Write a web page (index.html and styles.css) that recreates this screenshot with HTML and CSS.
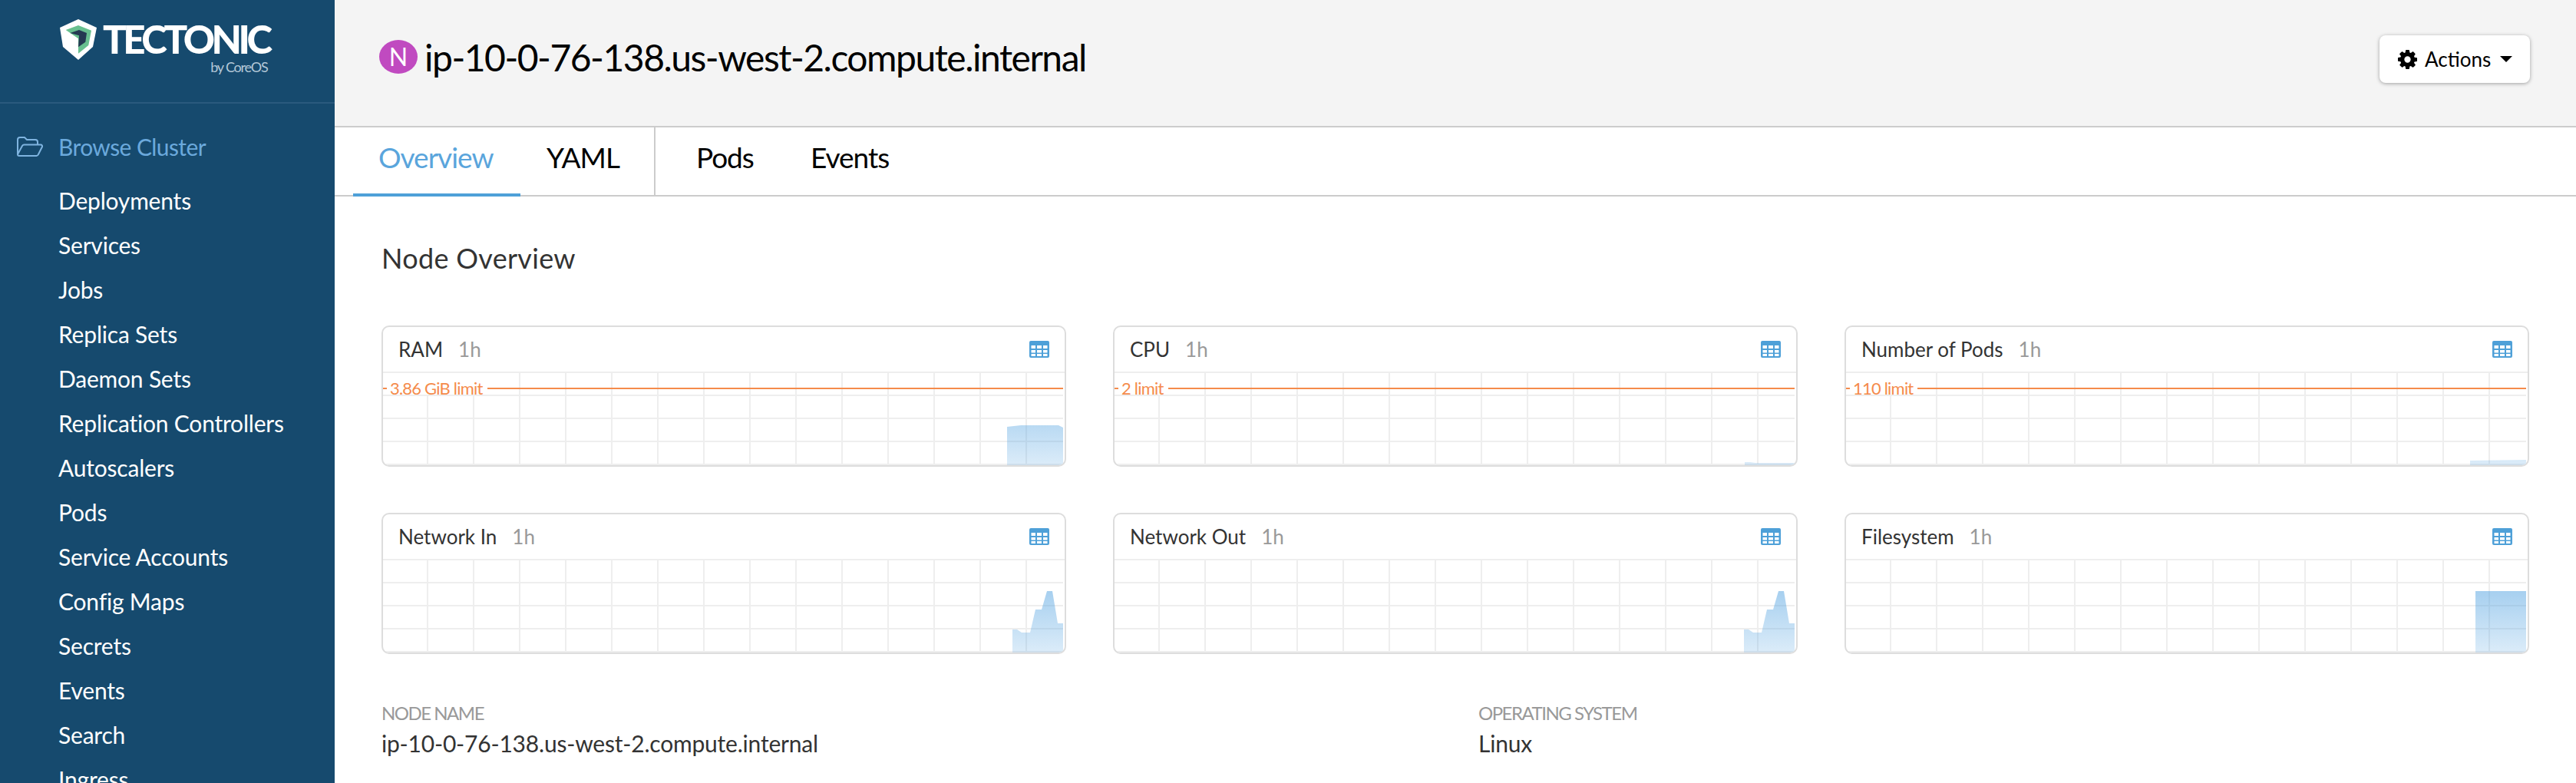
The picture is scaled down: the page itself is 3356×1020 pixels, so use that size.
FILE: index.html
```html
<!DOCTYPE html>
<html lang="en">
<head>
    <meta charset="UTF-8">
    <title>ip-10-0-76-138.us-west-2.compute.internal</title>
    <link rel="stylesheet" href="styles.css">
</head>
<body>
    <svg class="defs" width="0" height="0">
        <defs>
            <symbol id="table-icon" viewBox="0 0 26 22">
                <path fill-rule="evenodd" d="M2 0h22a2 2 0 0 1 2 2v18a2 2 0 0 1-2 2H2a2 2 0 0 1-2-2V2a2 2 0 0 1 2-2zM2.500 6v4h5.500V6zM10 6v4h6V6zM18 6v4h5.500V6zM2.500 12v3.500h5.500V12zM10 12v3.500h6V12zM18 12v3.500h5.500V12zM2.500 17v3h5.500v-3zM10 17v3h6v-3zM18 17v3h5.500v-3z"/>
            </symbol>
            <linearGradient id="area-fill" gradientUnits="userSpaceOnUse" x1="0" y1="40" x2="0" y2="120">
                <stop offset="0" stop-color="#4ea0e0" stop-opacity="0.5"/>
                <stop offset="1" stop-color="#4ea0e0" stop-opacity="0.2"/>
            </linearGradient>
        </defs>
    </svg>

    <nav class="sidebar">
        <div class="logo">
            <svg class="logo-mark" viewBox="0 0 48 53">
                <polygon fill="#fff" points="24,0 48,11 43,36 24,53 4,36 0,11"/>
                <polygon fill="#68c08f" points="7.700,14 24,8 41,14.700 37.300,34 24,44.700 24,25.300"/>
                <polygon fill="#253a52" points="13.300,18 25,14 35,18 33.300,29.700 24,36.300 25,21.300"/>
            </svg>
            <div class="logo-text">
                <div class="logo-name">TECTONIC</div>
                <div class="logo-by">by CoreOS</div>
            </div>
        </div>
        <div class="nav-head">
            <svg class="nav-folder" viewBox="0 0 34 26" fill="none" stroke="#7fb4e0" stroke-width="2">
                <path d="M1 23V4a3 3 0 0 1 3-3h6l3 3h11a3 3 0 0 1 3 3v3"/>
                <path d="M1 23l6-11a3 3 0 0 1 2.500-1.500H31a2 2 0 0 1 1.800 3L28 23a3 3 0 0 1-2.500 2H3a2 2 0 0 1-2-2z"/>
            </svg>
            Browse Cluster
        </div>
        <ul class="nav-list">
            <li>Deployments</li>
            <li>Services</li>
            <li>Jobs</li>
            <li>Replica Sets</li>
            <li>Daemon Sets</li>
            <li>Replication Controllers</li>
            <li>Autoscalers</li>
            <li>Pods</li>
            <li>Service Accounts</li>
            <li>Config Maps</li>
            <li>Secrets</li>
            <li>Events</li>
            <li>Search</li>
            <li>Ingress</li>
        </ul>
    </nav>

    <main class="main">
        <header class="page-head">
            <h1 class="page-title"><span class="badge">N</span>ip-10-0-76-138.us-west-2.compute.internal</h1>
            <button class="actions" type="button">
                <svg class="gear" viewBox="0 0 1536 1536"><path d="M1024 768q0-106-75-181t-181-75-181 75-75 181 75 181 181 75 181-75 75-181zm512-109v222q0 12-8 23t-20 13l-185 28q-19 54-39 91 35 50 107 138 10 12 10 25t-9 23q-27 37-99 108t-94 71q-12 0-26-9l-138-108q-44 23-91 38-16 136-29 186-7 28-36 28h-222q-14 0-24.500-8.500t-11.500-21.500l-28-184q-49-16-90-37l-141 107q-10 9-25 9-14 0-25-11-126-114-165-168-7-10-7-23 0-12 8-23 15-21 51-66.500t54-70.500q-27-50-41-99l-183-27q-13-2-21-12.500t-8-23.500v-222q0-12 8-23t19-13l186-28q14-46 39-92-40-57-107-138-10-12-10-24 0-10 9-23 26-36 98.500-107.500t94.500-71.500q13 0 26 10l138 107q44-23 91-38 16-136 29-186 7-28 36-28h222q14 0 24.500 8.500t11.500 21.500l28 184q49 16 90 37l142-107q9-9 24-9 13 0 25 10 129 119 165 170 7 8 7 22 0 12-8 23-15 21-51 66.500t-54 70.500q26 50 41 98l183 28q13 2 21 12.500t8 23.500z"/></svg>
                Actions
                <span class="caret"></span>
            </button>
        </header>

        <div class="tabs">
            <a class="tab active">Overview</a>
            <a class="tab">YAML</a>
            <span class="tab-sep"></span>
            <a class="tab">Pods</a>
            <a class="tab tab-last">Events</a>
        </div>

        <section class="content">
            <h2 class="section-title">Node Overview</h2>

            <div class="charts">
                <div class="card">
                    <div class="card-head"><span class="card-title">RAM</span><span class="card-range">1h</span><svg class="table-icon"><use href="#table-icon"/></svg></div>
                    <div class="plot">
                        <div class="limit"><span class="limit-dash"></span><span class="limit-label">3.86 GiB limit</span><span class="limit-line"></span></div>
                        <svg class="area" viewBox="0 0 886 120"><polygon points="813,120 813,70 831,68 880,68 886,71 886,122 813,122"/></svg>
                    </div>
                </div>
                <div class="card">
                    <div class="card-head"><span class="card-title">CPU</span><span class="card-range">1h</span><svg class="table-icon"><use href="#table-icon"/></svg></div>
                    <div class="plot">
                        <div class="limit"><span class="limit-dash"></span><span class="limit-label">2 limit</span><span class="limit-line"></span></div>
                        <svg class="area" viewBox="0 0 886 120"><polygon points="821,116 828,116 835,117 886,117 886,122 821,122"/></svg>
                    </div>
                </div>
                <div class="card">
                    <div class="card-head"><span class="card-title">Number of Pods</span><span class="card-range">1h</span><svg class="table-icon"><use href="#table-icon"/></svg></div>
                    <div class="plot">
                        <div class="limit"><span class="limit-dash"></span><span class="limit-label">110 limit</span><span class="limit-line"></span></div>
                        <svg class="area" viewBox="0 0 886 120"><polygon points="813,114 886,113 886,122 813,122"/></svg>
                    </div>
                </div>
                <div class="card">
                    <div class="card-head"><span class="card-title">Network In</span><span class="card-range">1h</span><svg class="table-icon"><use href="#table-icon"/></svg></div>
                    <div class="plot">
                        <svg class="area" viewBox="0 0 886 120"><polygon points="820,90 826,90 832,94 843,94 850,64 858,64 865,40 872,40 879,82 886,82 886,122 820,122"/></svg>
                    </div>
                </div>
                <div class="card">
                    <div class="card-head"><span class="card-title">Network Out</span><span class="card-range">1h</span><svg class="table-icon"><use href="#table-icon"/></svg></div>
                    <div class="plot">
                        <svg class="area" viewBox="0 0 886 120"><polygon points="820,90 826,90 832,94 843,94 850,64 858,64 865,40 872,40 879,82 886,82 886,122 820,122"/></svg>
                    </div>
                </div>
                <div class="card">
                    <div class="card-head"><span class="card-title">Filesystem</span><span class="card-range">1h</span><svg class="table-icon"><use href="#table-icon"/></svg></div>
                    <div class="plot">
                        <svg class="area" viewBox="0 0 886 120"><polygon points="820,40 886,40 886,122 820,122"/></svg>
                    </div>
                </div>
            </div>

            <div class="details">
                <div>
                    <div class="detail-label">Node Name</div>
                    <div class="detail-value">ip-10-0-76-138.us-west-2.compute.internal</div>
                </div>
                <div>
                    <div class="detail-label">Operating System</div>
                    <div class="detail-value">Linux</div>
                </div>
            </div>
        </section>
    </main>
</body>
</html>
```

FILE: styles.css
```css
* {
    box-sizing: border-box;
}
html, body {
    height: 100%;
}
body {
    margin: 0;
    display: flex;
    overflow: hidden;
    font-family: Lato, "Noto Sans", sans-serif;
    color: #333;
    background: #fff;
}
.defs {
    position: absolute;
}

/* sidebar */
.sidebar {
    width: 436px;
    flex: none;
    height: 1020px;
    overflow: hidden;
    background: #164a6e;
    color: #fff;
}
.logo {
    height: 135px;
    padding: 25px 0 0 78px;
    display: flex;
    align-items: flex-start;
    gap: 8px;
    border-bottom: 2px solid #2a5a7e;
}
.logo-mark {
    width: 48px;
    height: 53px;
    flex: none;
}
.logo-name {
    font-size: 51px;
    font-weight: 900;
    line-height: 44px;
    letter-spacing: -4.500px;
    margin-top: 4px;
}
.logo-by {
    font-size: 18px;
    line-height: 26px;
    letter-spacing: -1.200px;
    text-align: right;
    padding-right: 2px;
    color: #b4c8d8;
    margin-top: 1px;
}
.nav-head {
    height: 58px;
    margin-top: 27px;
    padding-left: 22px;
    display: flex;
    align-items: center;
    font-size: 30px;
    letter-spacing: -0.6px;
    color: #6ba9dc;
}
.nav-folder {
    width: 34px;
    height: 26px;
    margin-right: 20px;
}
.nav-list {
    list-style: none;
    margin: 12px 0 0;
    padding: 0 0 0 76px;
}
.nav-list li {
    height: 58px;
    line-height: 58px;
    font-size: 30px;
    letter-spacing: -0.2px;
    color: #fff;
    white-space: nowrap;
}

/* main column */
.main {
    flex: 1;
    min-width: 0;
}
.page-head {
    height: 166px;
    padding: 44px 60px 0 58px;
    display: flex;
    justify-content: space-between;
    align-items: flex-start;
    background: #f4f4f4;
    border-bottom: 2px solid #ccc;
}
.page-title {
    margin: 0;
    display: flex;
    align-items: center;
    height: 60px;
    font-size: 48px;
    font-weight: 400;
    letter-spacing: -1.5px;
    color: #000;
    white-space: nowrap;
}
.badge {
    width: 50px;
    height: 44px;
    margin-right: 9px;
    border-radius: 50%;
    background: #c04ac0;
    color: #fff;
    font-size: 32px;
    line-height: 44px;
    letter-spacing: 0;
    text-align: center;
}
.actions {
    width: 196px;
    height: 62px;
    margin-top: 2px;
    display: flex;
    align-items: center;
    padding: 0 0 0 24px;
    border: 0;
    border-radius: 8px;
    background: #fff;
    box-shadow: 0 1px 5px rgba(0, 0, 0, 0.35);
    font-family: inherit;
    font-size: 26px;
    color: #000;
}
.gear {
    width: 25px;
    height: 25px;
    margin-right: 10px;
}
.caret {
    margin-left: 12px;
    border-top: 8px solid #000;
    border-left: 8px solid transparent;
    border-right: 8px solid transparent;
}

/* tabs */
.tabs {
    height: 90px;
    display: flex;
    padding-left: 24px;
    border-bottom: 2px solid #ccc;
}
.tab {
    height: 90px;
    padding: 0 34px;
    line-height: 78px;
    font-size: 37px;
    letter-spacing: -1px;
    color: #000;
}
.tab.active {
    width: 218px;
    padding-left: 33px;
    color: #5aa5dc;
    border-bottom: 4px solid #4ea0d8;
}
.tab-sep {
    width: 2px;
    height: 88px;
    margin: 0 19px 0 11px;
    background: #ccc;
}
.tab-last {
    margin-left: 6px;
}

/* overview */
.content {
    padding: 0 61px;
}
.section-title {
    margin: 0;
    height: 168px;
    padding-top: 56px;
    font-size: 36px;
    line-height: 48px;
    letter-spacing: 0.3px;
    font-weight: 400;
    color: #333;
}
.charts {
    display: grid;
    grid-template-columns: repeat(3, 892px);
    column-gap: 61px;
    row-gap: 60px;
}
.card {
    height: 184px;
    border: 2px solid #ddd;
    border-radius: 10px;
    overflow: hidden;
    background: #fff;
}
.card-head {
    height: 60px;
    padding: 0 20px;
    display: flex;
    align-items: center;
    border-bottom: 2px solid #eee;
    font-size: 26px;
}
.card-title {
    color: #333;
}
.card-range {
    margin-left: 20px;
    color: #999;
}
.table-icon {
    width: 26px;
    height: 22px;
    margin-left: auto;
    fill: #4ea0d8;
}
.plot {
    position: relative;
    height: 120px;
    margin-right: 2px;
    background-image:
        linear-gradient(#eee 2px, transparent 2px),
        linear-gradient(90deg, transparent 57px, #eee 57px, #eee 59px, transparent 59px);
    background-size: 100% 30px, 60px 100%;
    background-position: 0 28px, 0 0;
}
.limit {
    position: absolute;
    top: 0;
    left: 0;
    right: 0;
    height: 28px;
    display: flex;
}
.limit-dash {
    width: 5px;
    height: 2px;
    margin-top: 19px;
    background: #f58b4b;
}
.limit-label {
    height: 28px;
    padding: 6px 6px 0 4px;
    background: #fff;
    color: #f58b4b;
    font-size: 22px;
    line-height: 28px;
    letter-spacing: -0.8px;
    white-space: nowrap;
}
.limit-line {
    flex: 1;
    height: 2px;
    margin-top: 19px;
    background: #f58b4b;
}
.area {
    position: absolute;
    top: 0;
    left: 0;
    width: 886px;
    height: 120px;
    overflow: visible;
    fill: url(#area-fill);
}
.details {
    display: grid;
    grid-template-columns: 1429px 1fr;
    margin-top: 62px;
}
.detail-label {
    font-size: 24px;
    line-height: 30px;
    letter-spacing: -1.500px;
    color: #999;
    text-transform: uppercase;
}
.detail-value {
    margin-top: 4px;
    font-size: 30px;
    line-height: 40px;
    letter-spacing: -0.2px;
    color: #333;
}
```
